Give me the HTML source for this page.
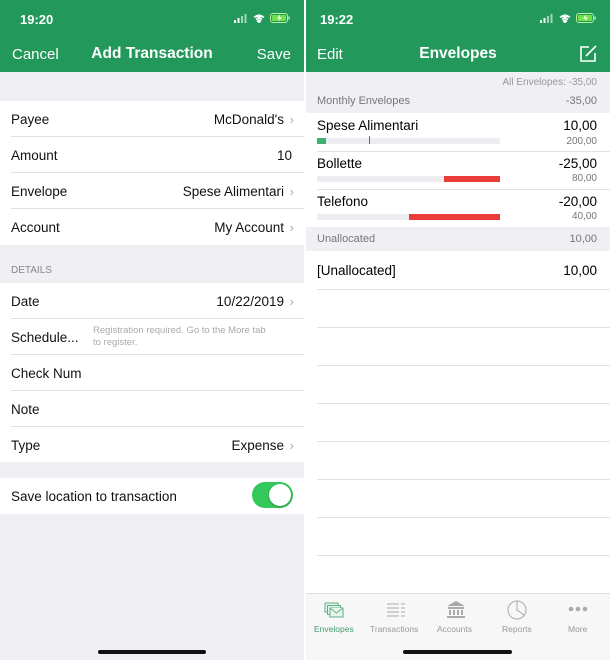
<!DOCTYPE html>
<html><head><meta charset="utf-8"><style>
*{margin:0;padding:0;box-sizing:border-box}
body{width:610px;height:660px;background:#fff;font-family:"Liberation Sans",sans-serif;position:relative;overflow:hidden}
.p{position:absolute;top:0;height:660px;overflow:hidden}
.L{left:0;width:304px;background:#efeff4}
.R{left:306px;width:304px;background:#fff}
.hd{position:absolute;left:0;top:0;width:100%;height:72px;background:#22985b;color:#fff}
.tm{position:absolute;top:12px;left:20px;font-size:13px;font-weight:bold}
.st{position:absolute;top:13px;right:14px;display:flex;gap:5px;align-items:center}
.nv{position:absolute;top:46px;font-size:15px}
.ti{position:absolute;top:45px;left:0;width:100%;text-align:center;font-size:15.5px;font-weight:bold}
.row{position:absolute;left:0;width:100%;background:#fff;font-size:13.5px;color:#111}
.row .l{position:absolute;left:11px;top:11px}
.row .r{position:absolute;right:20px;top:11px}
.row .c{position:absolute;right:10px;top:11px;color:#aaa;font-size:13px}
.ln{position:absolute;left:11px;right:0;height:1px;background:#e2e2e6}
.sm{font-size:10px;color:#777}
.sh{position:absolute;font-size:11px;color:#777}
</style></head><body>
<div class="p L">
 <div class="hd"><div class="tm">19:20</div>
  <div class="st"><svg width="14" height="9"><rect x="0" y="6" width="2" height="3" fill="#fff"/><rect x="3.5" y="4" width="2" height="5" fill="#fff"/><rect x="7" y="2" width="2" height="7" fill="#9fd6b5"/><rect x="10.5" y="0" width="2" height="9" fill="#9fd6b5"/></svg><svg width="12" height="9" viewBox="0 0 12 9"><path d="M1 3.5Q6-1 11 3.5M3 5.5Q6 3 9 5.5M6 8.5L4.5 7Q6 6 7.5 7Z" stroke="#fff" stroke-width="1.5" fill="#fff"/></svg><svg width="20" height="10"><rect x=".5" y=".5" width="17" height="9" rx="2.5" fill="none" stroke="#b5f0a0"/><rect x="2" y="2" width="14" height="6" rx="1" fill="#6fe04a"/><rect x="18.3" y="3.5" width="1.5" height="3" fill="#b5f0a0"/><path d="M10 1.5L7 5.5H9.5L8.5 8.5L12 4.5H9.5Z" fill="#fff"/></svg></div>
  <div class="nv" style="left:12px">Cancel</div><div class="ti">Add Transaction</div><div class="nv" style="right:13px">Save</div></div>
 <div class="row" style="top:101px;height:144px">
  <div class="row" style="top:0;height:36px"><span class="l">Payee</span><span class="r">McDonald's</span><span class="c">›</span></div>
  <div class="ln" style="top:35px"></div>
  <div class="row" style="top:36px;height:36px"><span class="l">Amount</span><span class="r" style="right:12px">10</span></div>
  <div class="ln" style="top:71px"></div>
  <div class="row" style="top:72px;height:36px"><span class="l">Envelope</span><span class="r">Spese Alimentari</span><span class="c">›</span></div>
  <div class="ln" style="top:107px"></div>
  <div class="row" style="top:108px;height:36px"><span class="l">Account</span><span class="r">My Account</span><span class="c">›</span></div>
 </div>
 <div style="position:absolute;left:11px;top:265px;font-size:10px;color:#888">DETAILS</div>
 <div class="row" style="top:283px;height:179px">
  <div class="row" style="top:0;height:36px"><span class="l">Date</span><span class="r">10/22/2019</span><span class="c">›</span></div>
  <div class="ln" style="top:35px"></div>
  <div class="row" style="top:36px;height:36px"><span class="l">Schedule...</span><span style="position:absolute;left:93px;top:6px;font-size:9.5px;color:#aaa;line-height:12px">Registration required. Go to the More tab<br>to register.</span></div>
  <div class="ln" style="top:71px"></div>
  <div class="row" style="top:72px;height:36px"><span class="l">Check Num</span></div>
  <div class="ln" style="top:107px"></div>
  <div class="row" style="top:108px;height:36px"><span class="l">Note</span></div>
  <div class="ln" style="top:143px"></div>
  <div class="row" style="top:144px;height:35px"><span class="l">Type</span><span class="r">Expense</span><span class="c">›</span></div>
 </div>
 <div class="row" style="top:478px;height:36px"><span class="l">Save location to transaction</span>
  <div style="position:absolute;right:11px;top:4px;width:41px;height:26px;border-radius:13px;background:#34c759"><div style="position:absolute;right:2px;top:2px;width:22px;height:22px;border-radius:50%;background:#fff;box-shadow:0 1px 2px rgba(0,0,0,.3)"></div></div></div>
 <div style="position:absolute;left:98px;top:650px;width:108px;height:4px;border-radius:2px;background:#111"></div>
</div>
<div class="p R">
 <div class="hd"><div class="tm" style="left:14px">19:22</div>
  <div class="st"><svg width="14" height="9"><rect x="0" y="6" width="2" height="3" fill="#fff"/><rect x="3.5" y="4" width="2" height="5" fill="#fff"/><rect x="7" y="2" width="2" height="7" fill="#9fd6b5"/><rect x="10.5" y="0" width="2" height="9" fill="#9fd6b5"/></svg><svg width="12" height="9" viewBox="0 0 12 9"><path d="M1 3.5Q6-1 11 3.5M3 5.5Q6 3 9 5.5M6 8.5L4.5 7Q6 6 7.5 7Z" stroke="#fff" stroke-width="1.5" fill="#fff"/></svg><svg width="20" height="10"><rect x=".5" y=".5" width="17" height="9" rx="2.5" fill="none" stroke="#b5f0a0"/><rect x="2" y="2" width="14" height="6" rx="1" fill="#6fe04a"/><rect x="18.3" y="3.5" width="1.5" height="3" fill="#b5f0a0"/><path d="M10 1.5L7 5.5H9.5L8.5 8.5L12 4.5H9.5Z" fill="#fff"/></svg></div>
  <div class="nv" style="left:11px">Edit</div><div class="ti">Envelopes</div>
  <svg style="position:absolute;right:12px;top:44px" width="19" height="19" viewBox="0 0 19 19"><path d="M10 3H2V17H16V9" fill="none" stroke="#fff" stroke-width="1.6"/><path d="M7 12L17 2" stroke="#fff" stroke-width="1.6"/></svg></div>
 <div style="position:absolute;left:0;top:72px;width:100%;height:41px;background:#efeff4"></div>
 <div class="sm" style="position:absolute;right:13px;top:77px;color:#999">All Envelopes: -35,00</div>
 <div class="sh" style="left:11px;top:95px">Monthly Envelopes</div>
 <div class="sh" style="right:13px;top:95px">-35,00</div>
 <div style="position:absolute;left:11px;top:118px;font-size:13.5px">Spese Alimentari</div>
 <div style="position:absolute;right:13px;top:118px;font-size:13.5px">10,00</div>
 <div style="position:absolute;left:11px;top:138px;width:183px;height:6px;background:#ececf1"><div style="width:9px;height:6px;background:#3cb371"></div><div style="position:absolute;left:52px;top:-2px;width:1px;height:8px;background:#666"></div></div>
 <div class="sm" style="position:absolute;right:13px;top:136px">200,00</div>
 <div class="ln" style="top:151px"></div>
 <div style="position:absolute;left:11px;top:156px;font-size:13.5px">Bollette</div>
 <div style="position:absolute;right:13px;top:156px;font-size:13.5px">-25,00</div>
 <div style="position:absolute;left:11px;top:176px;width:183px;height:6px;background:#ececf1"><div style="position:absolute;right:0;width:56px;height:6px;background:#ea3d3a"></div></div>
 <div class="sm" style="position:absolute;right:13px;top:173px">80,00</div>
 <div class="ln" style="top:189px"></div>
 <div style="position:absolute;left:11px;top:194px;font-size:13.5px">Telefono</div>
 <div style="position:absolute;right:13px;top:194px;font-size:13.5px">-20,00</div>
 <div style="position:absolute;left:11px;top:214px;width:183px;height:6px;background:#ececf1"><div style="position:absolute;right:0;width:91px;height:6px;background:#ea3d3a"></div></div>
 <div class="sm" style="position:absolute;right:13px;top:211px">40,00</div>
 <div style="position:absolute;left:0;top:227px;width:100%;height:24px;background:#efeff4"></div>
 <div class="sh" style="left:11px;top:233px">Unallocated</div>
 <div class="sh" style="right:13px;top:233px">10,00</div>
 <div style="position:absolute;left:11px;top:263px;font-size:13.5px">[Unallocated]</div>
 <div style="position:absolute;right:13px;top:263px;font-size:13.5px">10,00</div>
 <div class="ln" style="top:289px"></div><div class="ln" style="top:327px"></div><div class="ln" style="top:365px"></div><div class="ln" style="top:403px"></div><div class="ln" style="top:441px"></div><div class="ln" style="top:479px"></div><div class="ln" style="top:517px"></div><div class="ln" style="top:555px"></div>
 <div style="position:absolute;left:0;top:593px;width:100%;height:67px;background:#f7f7f7;border-top:1px solid #ddd;font-size:8.5px;color:#999">
  <svg style="position:absolute;left:18px;top:8px" width="20" height="16" viewBox="0 0 20 16" fill="#e8f4ec" stroke="#5fb085"><rect x="1" y="1" width="13" height="9"/><rect x="3.5" y="3.5" width="13" height="9"/><rect x="6" y="6" width="13" height="9"/><path d="M6 6L12.5 11L19 6"/></svg>
  <span style="position:absolute;left:8px;top:30px;color:#3f9e6c">Envelopes</span>
  <svg style="position:absolute;left:81px;top:9px" width="18" height="14" stroke="#aaa"><path d="M0 1H12M0 5H12M0 9H12M0 13H12M14 1H18M14 5H18M14 9H18M14 13H18"/></svg>
  <span style="position:absolute;left:64px;top:30px">Transactions</span>
  <svg style="position:absolute;left:141px;top:7px" width="18" height="17" fill="#aaa"><path d="M9 0L18 5H0Z"/><rect x="1" y="6" width="16" height="2"/><rect x="2" y="9" width="2" height="5"/><rect x="6" y="9" width="2" height="5"/><rect x="10" y="9" width="2" height="5"/><rect x="14" y="9" width="2" height="5"/><rect x="0" y="15" width="18" height="2"/></svg>
  <span style="position:absolute;left:131px;top:30px">Accounts</span>
  <svg style="position:absolute;left:201px;top:6px" width="20" height="20" fill="none" stroke="#aaa"><circle cx="10" cy="10" r="9"/><path d="M10 1V10L17 15"/></svg>
  <span style="position:absolute;left:196px;top:30px">Reports</span>
  <svg style="position:absolute;left:262px;top:12px" width="20" height="6" fill="#aaa"><circle cx="3" cy="3" r="2.3"/><circle cx="10" cy="3" r="2.3"/><circle cx="17" cy="3" r="2.3"/></svg>
  <span style="position:absolute;left:262px;top:30px">More</span>
  <div style="position:absolute;left:97px;top:56px;width:109px;height:4px;border-radius:2px;background:#111"></div>
 </div>
</div>
</body></html>
